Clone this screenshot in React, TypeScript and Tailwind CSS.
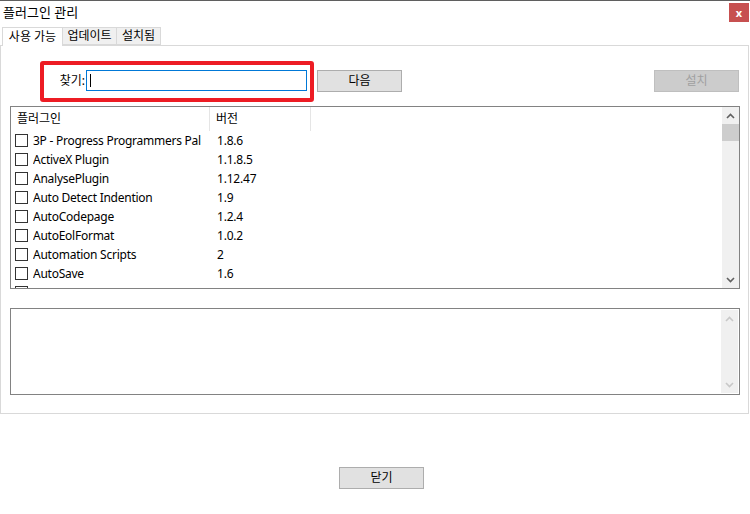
import React from 'react';

const plugins: [string, string][] = [
  ['3P - Progress Programmers Pal', '1.8.6'],
  ['ActiveX Plugin', '1.1.8.5'],
  ['AnalysePlugin', '1.12.47'],
  ['Auto Detect Indention', '1.9'],
  ['AutoCodepage', '1.2.4'],
  ['AutoEolFormat', '1.0.2'],
  ['Automation Scripts', '2'],
  ['AutoSave', '1.6'],
];

const Chevron = ({ up, color }: { up?: boolean; color: string }) => (
  <svg width="9" height="6" viewBox="0 0 9 6">
    <path d={up ? 'M1 5 L4.5 1.5 L8 5' : 'M1 1 L4.5 4.5 L8 1'} fill="none" stroke={color} strokeWidth="1.6" />
  </svg>
);

const Scrollbar = ({ disabled }: { disabled?: boolean }) => {
  const arrow = disabled ? '#c8c8c8' : '#606060';
  return (
    <div className="flex h-full w-[17px] shrink-0 flex-col bg-[#f0f0f0]">
      <div className="flex h-[17px] items-center justify-center">
        <Chevron up color={arrow} />
      </div>
      {!disabled && <div className="h-[17px] bg-[#cdcdcd]" />}
      <div className="flex-1" />
      <div className="flex h-[17px] items-center justify-center">
        <Chevron color={arrow} />
      </div>
    </div>
  );
};

export default function App() {
  return (
    <div className="relative h-[514px] w-[750px] overflow-hidden border-t border-[#5f5f5f] bg-white text-[12px] text-black [font-family:'Noto_Sans','Noto_Sans_CJK_KR',sans-serif]">
      <div className="flex h-[25px] items-start justify-between">
        <span className="pl-[3px] pt-[2px] text-[13px] leading-[18px]">플러그인 관리</span>
        <div className="mr-[1px] mt-[2px] flex h-[19px] w-[20px] items-center justify-center bg-[#c75050] text-[11px] font-bold leading-none text-white">
          x
        </div>
      </div>

      <div className="flex h-[19px] items-end pl-[2px]">
        <div className="relative z-10 -mb-px flex h-[19px] w-[61px] items-center justify-center border border-b-0 border-[#d9d9d9] bg-white">
          사용 가능
        </div>
        <div className="flex h-[18px] w-[54px] items-center justify-center border border-l-0 border-[#d9d9d9] bg-[#f0f0f0]">
          업데이트
        </div>
        <div className="flex h-[18px] w-[44px] items-center justify-center border border-l-0 border-[#d9d9d9] bg-[#f0f0f0]">
          설치됨
        </div>
      </div>

      <div className="relative flex h-[369px] w-[749px] flex-col border border-[#d9d9d9] bg-white">
        <div className="pointer-events-none absolute left-[39px] top-[15px] h-[41px] w-[274px] rounded-[3px] border-[4px] border-[#ed1c24]" />

        <div className="mt-[24px] flex h-[21px] items-center">
          <span className="w-[85px] pr-[1px] text-right">찾기:</span>
          <div className="flex h-[21px] w-[221px] items-center border border-[#0078d7] pl-[3px]">
            <div className="h-[13px] w-px bg-black" />
          </div>
          <div className="ml-[10px] flex h-[22px] w-[85px] items-center justify-center border border-[#adadad] bg-[#e1e1e1]">
            다음
          </div>
          <div className="flex-1" />
          <div className="mr-[9px] flex h-[22px] w-[85px] items-center justify-center border border-[#bfbfbf] bg-[#cccccc] text-[#a0a0a0]">
            설치
          </div>
        </div>

        <div className="ml-[9px] mt-[15px] flex h-[183px] w-[730px] border border-[#828282]">
          <div className="flex-1 overflow-hidden">
            <div className="flex h-[24px] items-center">
              <div className="flex h-full w-[199px] items-center border-r border-[#e5e5e5] pl-[6px]">플러그인</div>
              <div className="flex h-full w-[101px] items-center border-r border-[#e5e5e5] pl-[6px]">버전</div>
            </div>
            {plugins.map(([name, ver]) => (
              <div key={name} className="flex h-[19px] items-center">
                <div className="ml-[4px] h-[13px] w-[13px] shrink-0 border border-[#333333] bg-white" />
                <span className="ml-[5px] w-[178px] shrink-0 overflow-hidden whitespace-nowrap tracking-[-0.25px]">{name}</span>
                <span className="pl-[6px] tracking-[-0.2px]">{ver}</span>
              </div>
            ))}
            <div className="flex h-[19px] items-start pt-[3px]">
              <div className="ml-[4px] h-[13px] w-[13px] shrink-0 border border-[#333333] bg-white" />
            </div>
          </div>
          <Scrollbar />
        </div>

        <div className="ml-[9px] mt-[19px] flex h-[87px] w-[730px] border border-[#828282] p-[1px] pl-0">
          <div className="flex-1" />
          <Scrollbar disabled />
        </div>
      </div>

      <div className="mt-[53px] flex justify-center pl-[13px]">
        <div className="flex h-[22px] w-[85px] items-center justify-center border border-[#adadad] bg-[#e1e1e1]">
          닫기
        </div>
      </div>
    </div>
  );
}
